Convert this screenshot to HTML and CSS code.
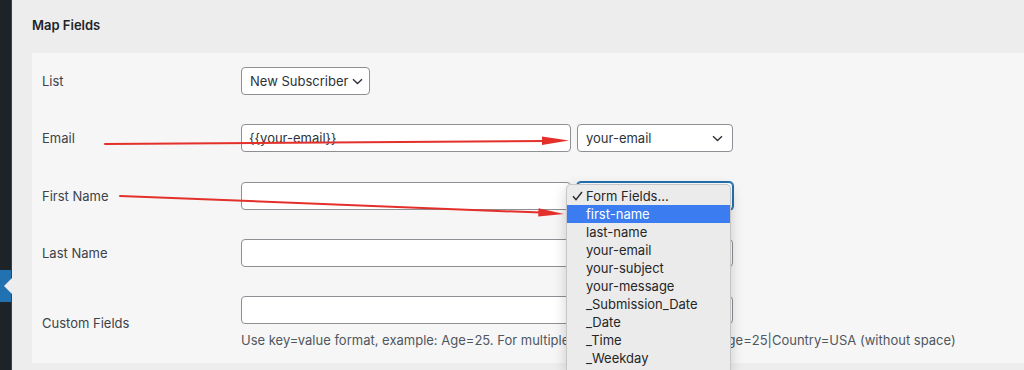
FILE: index.html
```html
<!DOCTYPE html>
<html lang="en">
<head>
    <meta charset="UTF-8">
    <meta name="viewport" content="width=device-width, initial-scale=1.0">
    <title>Map Fields</title>
    <link rel="stylesheet" href="styles.css">
</head>
<body>
    <div class="admin">
        <div class="adminmenu">
            <div class="menu-top"></div>
            <div class="menu-current"><span class="notch"></span></div>
            <div class="menu-rest"></div>
        </div>

        <div class="content">
            <h2 class="section-title">Map Fields</h2>

            <div class="panel">
                <div class="row">
                    <div class="label">List</div>
                    <div class="field">
                        <div class="select select-list">
                            <span>New Subscriber</span>
                            <svg class="chevron" width="11" height="7" viewBox="0 0 11 7"><polyline points="1,1.2 5.5,5.5 10,1.2" fill="none" stroke="#2c3338" stroke-width="1.4"/></svg>
                        </div>
                    </div>
                </div>

                <div class="row">
                    <div class="label">Email</div>
                    <div class="field">
                        <div class="input">{{your-email}}</div>
                        <div class="select select-map">
                            <span>your-email</span>
                            <svg class="chevron" width="11" height="7" viewBox="0 0 11 7"><polyline points="1,1.2 5.5,5.5 10,1.2" fill="none" stroke="#2c3338" stroke-width="1.4"/></svg>
                        </div>
                    </div>
                </div>

                <div class="row">
                    <div class="label">First Name</div>
                    <div class="field">
                        <div class="input"></div>
                        <div class="select select-map focused">
                            <span>Form Fields...</span>
                        </div>
                    </div>
                </div>

                <div class="row">
                    <div class="label">Last Name</div>
                    <div class="field">
                        <div class="input"></div>
                        <div class="select select-map">
                            <span>Form Fields...</span>
                        </div>
                    </div>
                </div>

                <div class="row row-last">
                    <div class="label">Custom Fields</div>
                    <div class="field field-stack">
                        <div class="input input-wide"></div>
                        <p class="help">Use key=value format, example: Age=25. For multiple values, separate with |: Age=25|Country=USA (without space)</p>
                    </div>
                </div>
            </div>
        </div>
    </div>

    <div class="dropdown">
        <div class="option">
            <svg class="check" width="11" height="10" viewBox="0 0 11 10"><polyline points="1,5.2 4,8.6 10,1" fill="none" stroke="#262626" stroke-width="1.4"/></svg>
            Form Fields...
        </div>
        <div class="option selected">first-name</div>
        <div class="option">last-name</div>
        <div class="option">your-email</div>
        <div class="option">your-subject</div>
        <div class="option">your-message</div>
        <div class="option">_Submission_Date</div>
        <div class="option">_Date</div>
        <div class="option">_Time</div>
        <div class="option">_Weekday</div>
    </div>

    <svg class="annotations" width="1024" height="370" viewBox="0 0 1024 370">
        <line x1="105" y1="144" x2="546" y2="141" stroke="#e3302a" stroke-width="2" stroke-linecap="round"/>
        <polygon points="569,140.6 542,136.6 542,145" fill="#e3302a"/>
        <line x1="120" y1="196" x2="541" y2="212.6" stroke="#e3302a" stroke-width="2" stroke-linecap="round"/>
        <polygon points="564,214 538.5,208.2 538.2,216.6" fill="#e3302a"/>
    </svg>
</body>
</html>
```

FILE: styles.css
```css
:root {
    --admin-dark: #1d2327;
    --admin-blue: #2271b1;
    --page-bg: #ededed;
    --panel-bg: #f6f6f6;
    --text: #2c3338;
    --muted: #50575e;
    --border: #8c8f94;
}

body {
    margin: 0;
    font-family: Inter, "Noto Sans", sans-serif;
    font-size: 13px;
    color: var(--text);
    background-color: var(--page-bg);
    overflow: hidden;
}

.admin {
    display: flex;
    height: 370px;
}

.adminmenu {
    width: 11px;
    border-right: 1px solid #3c434a;
    background-color: var(--admin-dark);
    display: flex;
    flex-direction: column;
}

.menu-top {
    height: 270px;
}

.menu-current {
    position: relative;
    height: 32px;
    background-color: var(--admin-blue);
}

.notch {
    position: absolute;
    top: 8px;
    right: -1px;
    border-style: solid;
    border-width: 8px 8px 8px 0;
    border-color: transparent var(--page-bg) transparent transparent;
}

.menu-rest {
    flex: 1;
}

.content {
    flex: 1;
    padding-left: 20px;
}

.section-title {
    margin: 0;
    height: 53px;
    box-sizing: border-box;
    padding-top: 17px;
    font-size: 13px;
    line-height: 17px;
    font-weight: 600;
    color: #1d2327;
}

.panel {
    background-color: var(--panel-bg);
    padding: 0 10px;
}

.row {
    display: grid;
    grid-template-columns: 199px 1fr;
    align-items: center;
    padding: 14px 0 15.25px;
}

.row-last {
    padding-bottom: 14px;
}

.label {
    color: #3c434a;
    line-height: 18px;
}

.field {
    display: flex;
    gap: 6px;
}

.field-stack {
    flex-direction: column;
    gap: 0;
}

.input,
.select {
    box-sizing: border-box;
    height: 28px;
    border: 1px solid var(--border);
    border-radius: 4px;
    background: white;
    display: flex;
    align-items: center;
    padding: 0 7px;
    color: var(--text);
}

.input {
    width: 330px;
}

.input-wide {
    width: 492px;
}

.select {
    justify-content: space-between;
    gap: 4px;
}

.select-list {
    padding: 0 6px 0 8px;
}

.select-map {
    width: 156px;
    padding: 0 9px 0 8px;
}

.select.focused {
    border-color: var(--admin-blue);
    box-shadow: 0 0 0 1px var(--admin-blue);
}

.chevron {
    flex-shrink: 0;
}

.help {
    margin: 7px 0 0;
    line-height: 18px;
    color: var(--muted);
    white-space: nowrap;
}

.dropdown {
    position: absolute;
    left: 566px;
    top: 184px;
    width: 165px;
    height: 186px;
    box-sizing: border-box;
    padding-top: 2px;
    background-color: #ebebeb;
    border: 1px solid #c6c6c6;
    border-bottom: none;
    border-radius: 5px 5px 0 0;
    box-shadow: 0 4px 14px rgba(0,0,0,0.18);
    overflow: hidden;
}

.option {
    position: relative;
    height: 18px;
    line-height: 18px;
    padding-left: 19px;
    color: #262626;
}

.option.selected {
    background-color: #3b7cf0;
    color: white;
}

.check {
    position: absolute;
    left: 5px;
    top: 4px;
}

.annotations {
    position: absolute;
    left: 0;
    top: 0;
    pointer-events: none;
}
```
